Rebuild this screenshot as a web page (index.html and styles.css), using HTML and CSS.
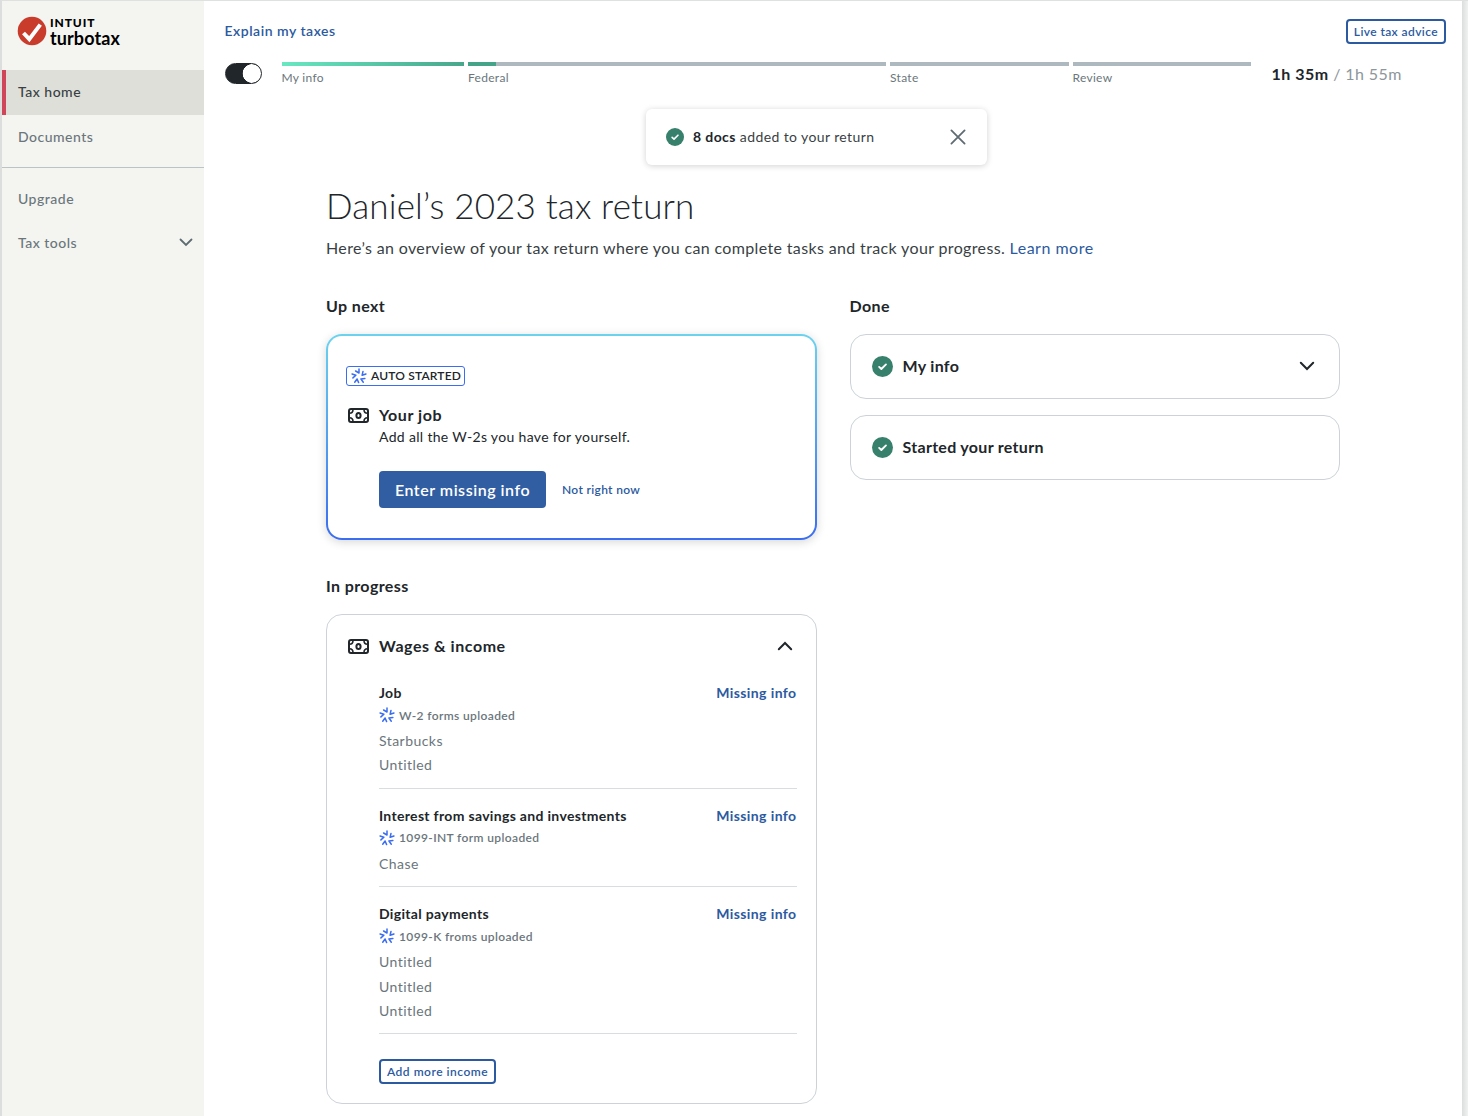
FILE: index.html
```html
<!DOCTYPE html>
<html lang="en">
  <head>
    <meta charset="UTF-8">
    <title>Daniel's 2023 tax return</title>
    <link rel="stylesheet" href="styles.css">
  </head>
  <body>
    <!-- Shared icons -->
    <svg class="sprite" width="0" height="0">
      <symbol id="icon-check" viewBox="0 0 20 20">
        <circle cx="10" cy="10" r="10" fill="#37806b"/>
        <path d="M6.8 10.4l2.1 2L13.3 8" fill="none" stroke="#fff" stroke-width="1.8" stroke-linecap="round" stroke-linejoin="round"/>
      </symbol>
      <symbol id="icon-spark" viewBox="0 0 16 16">
        <g fill="none" stroke="#3b6df0" stroke-width="1.5" stroke-linecap="round" stroke-linejoin="round">
          <path d="M8 1V5L4.6 3"/>
          <path d="M8 1V5L4.6 3" transform="rotate(72 8 8.3)"/>
          <path d="M8 1V5L4.6 3" transform="rotate(144 8 8.3)"/>
          <path d="M8 1V5L4.6 3" transform="rotate(216 8 8.3)"/>
          <path d="M8 1V5L4.6 3" transform="rotate(288 8 8.3)"/>
        </g>
      </symbol>
      <symbol id="icon-cash" viewBox="0 0 21 15">
        <g fill="none" stroke="#21262a" stroke-width="2">
          <rect x="1" y="1" width="19" height="13" rx="2"/>
          <ellipse cx="10.5" cy="7.5" rx="2.1" ry="2.6"/>
          <path d="M1.5 5.2C3.8 5.2 5 4 5 1.5M16 1.5c0 2.5 1.2 3.7 3.5 3.7M1.5 9.8C3.8 9.8 5 11 5 13.5M16 13.5c0-2.5 1.2-3.7 3.5-3.7" stroke-width="1.6"/>
        </g>
      </symbol>
    </svg>

    <div class="app">
      <aside class="sidebar">
        <div class="logo">
          <svg width="30" height="30" viewBox="0 0 30 30">
            <circle cx="15" cy="15" r="14.3" fill="#c93c2c"/>
            <path d="M6.5 17l5.8 6.2L23.3 8.6" fill="none" stroke="#fff" stroke-width="4"/>
          </svg>
          <div class="logo-text">
            <span class="logo-intuit">INTUIT</span>
            <span class="logo-name">turbotax</span>
          </div>
        </div>
        <nav>
          <a class="nav-item active">Tax home</a>
          <a class="nav-item">Documents</a>
          <hr class="nav-line">
          <a class="nav-item">Upgrade</a>
          <a class="nav-item">Tax tools
            <svg width="14" height="9" viewBox="0 0 14 9"><path d="M1.5 1.5L7 7l5.5-5.5" fill="none" stroke="#5f6b72" stroke-width="1.8" stroke-linecap="round"/></svg>
          </a>
        </nav>
      </aside>

      <main class="main">
        <header class="topbar">
          <a class="explain">Explain my taxes</a>
          <button class="btn-outline">Live tax advice</button>
        </header>

        <div class="progress">
          <span class="toggle"></span>
          <div class="steps">
            <div class="step done">My info</div>
            <div class="step started">Federal</div>
            <div class="step">State</div>
            <div class="step">Review</div>
          </div>
          <div class="time"><b>1h 35m</b> <span>/ 1h 55m</span></div>
        </div>

        <div class="toast">
          <svg width="18" height="18"><use href="#icon-check"/></svg>
          <span class="toast-text"><b>8 docs</b> added to your return</span>
          <svg width="16" height="16" viewBox="0 0 16 16"><path d="M1.4 1.4l13.2 13.2M14.6 1.4L1.4 14.6" stroke="#5f6b72" stroke-width="1.8" stroke-linecap="round"/></svg>
        </div>

        <div class="content">
          <h1>Daniel’s 2023 tax return</h1>
          <p class="intro">Here’s an overview of your tax return where you can complete tasks and track your progress. <a>Learn more</a></p>

          <div class="columns">
            <div class="column">
              <h2>Up next</h2>
              <section class="card card-next">
                <span class="badge"><svg width="16" height="16"><use href="#icon-spark"/></svg>AUTO STARTED</span>
                <div class="card-head">
                  <svg class="cash" width="21" height="15"><use href="#icon-cash"/></svg>
                  <h3>Your job</h3>
                </div>
                <p class="job-text">Add all the W-2s you have for yourself.</p>
                <div class="actions">
                  <button class="btn-primary">Enter missing info</button>
                  <a class="skip">Not right now</a>
                </div>
              </section>

              <h2>In progress</h2>
              <section class="card card-wages">
                <div class="card-head">
                  <svg class="cash" width="21" height="15"><use href="#icon-cash"/></svg>
                  <h3>Wages &amp; income</h3>
                  <svg class="chevron" width="16" height="10" viewBox="0 0 16 10"><path d="M1.8 8.2L8 2l6.2 6.2" fill="none" stroke="#21262a" stroke-width="2" stroke-linecap="round"/></svg>
                </div>

                <div class="income">
                  <div class="income-title"><span>Job</span><a>Missing info</a></div>
                  <div class="uploaded"><svg width="16" height="16"><use href="#icon-spark"/></svg>W-2 forms uploaded</div>
                  <ul>
                    <li>Starbucks</li>
                    <li>Untitled</li>
                  </ul>
                </div>
                <div class="income">
                  <div class="income-title"><span>Interest from savings and investments</span><a>Missing info</a></div>
                  <div class="uploaded"><svg width="16" height="16"><use href="#icon-spark"/></svg>1099-INT form uploaded</div>
                  <ul>
                    <li>Chase</li>
                  </ul>
                </div>
                <div class="income">
                  <div class="income-title"><span>Digital payments</span><a>Missing info</a></div>
                  <div class="uploaded"><svg width="16" height="16"><use href="#icon-spark"/></svg>1099-K froms uploaded</div>
                  <ul>
                    <li>Untitled</li>
                    <li>Untitled</li>
                    <li>Untitled</li>
                  </ul>
                </div>
                <button class="btn-outline btn-add">Add more income</button>
              </section>
            </div>

            <div class="column">
              <h2>Done</h2>
              <section class="card card-done">
                <svg width="21" height="21"><use href="#icon-check"/></svg>
                <h3>My info</h3>
                <svg class="chevron" width="16" height="10" viewBox="0 0 16 10"><path d="M1.8 1.8L8 8l6.2-6.2" fill="none" stroke="#21262a" stroke-width="2" stroke-linecap="round"/></svg>
              </section>
              <section class="card card-done">
                <svg width="21" height="21"><use href="#icon-check"/></svg>
                <h3>Started your return</h3>
              </section>
            </div>
          </div>
        </div>
      </main>
      <div class="edge"></div>
    </div>
  </body>
</html>
```
FILE: styles.css
```css
* {
  box-sizing: border-box;
}

body {
  margin: 0;
  font-family: Lato, "Liberation Sans", sans-serif;
  letter-spacing: 0.4px;
  color: #21262a;
  background: #fff;
}

h1, h2, h3, p, ul {
  margin: 0;
  padding: 0;
}

a {
  color: #2c5aa0;
}

.sprite {
  display: block;
}

.app {
  display: flex;
  width: 1468px;
  height: 1116px;
  border-top: 1px solid #dfe0e0;
  border-left: 2px solid #dcdddd;
  overflow: hidden;
}

.edge {
  width: 6px;
  background: linear-gradient(to right, #dcdddd, #f0f1f1);
}

/* Sidebar */
.sidebar {
  width: 202px;
  background: #f4f5f0;
}

.logo {
  display: flex;
  height: 69px;
  padding: 15px 0 0 15px;
}

.logo-text {
  display: flex;
  flex-direction: column;
  padding-left: 3px;
  color: #000;
}

.logo-intuit {
  font-size: 12px;
  line-height: 14px;
  font-weight: 900;
  letter-spacing: 0.9px;
}

.logo-name {
  font-size: 18px;
  line-height: 16px;
  font-weight: 700;
  letter-spacing: 0.1px;
}

.nav-item {
  display: flex;
  align-items: center;
  justify-content: space-between;
  height: 44.5px;
  padding: 0 11px 0 16px;
  font-size: 14px;
  font-weight: 500;
  letter-spacing: 0.5px;
  color: #6b767c;
}

.nav-item.active {
  background: #dedfd9;
  border-left: 4px solid #d0455a;
  padding: 0 0 1px 12px;
  color: #393f44;
}

.nav-line {
  margin: 8px 0 8px;
  border: none;
  border-top: 1px solid #bac3c8;
}

/* Main area */
.main {
  flex: 1;
  background: #fff;
}

.topbar {
  display: flex;
  align-items: center;
  justify-content: space-between;
  padding: 18px 16px 0 20.5px;
}

.explain {
  padding-bottom: 2px;
  font-size: 14px;
  font-weight: 600;
  letter-spacing: 0.52px;
}

.btn-outline {
  height: 25px;
  padding: 0 6px;
  border: 2px solid #2c5aa0;
  border-radius: 4px;
  background: #fff;
  font: 600 12px/20px Lato, sans-serif;
  letter-spacing: 0.4px;
  color: #2c5aa0;
}

.progress {
  display: flex;
  padding: 18px 0 0 20.5px;
}

.toggle {
  width: 37px;
  height: 21px;
  margin: 1px 20px 0 0;
  border: 1px solid #21262a;
  border-radius: 11px;
  background: radial-gradient(circle at 26px 9.5px, #fff 9px, #21262a 9.6px);
}

.steps {
  display: grid;
  grid-template-columns: 182.5px 418px 178.5px 178.5px;
  gap: 4px;
  width: 970px;
}

.step {
  border-top: 4px solid #aeb9bf;
  font-size: 12px;
  line-height: 24px;
  letter-spacing: 0.3px;
  color: #6b767c;
}

.step.done {
  border-image: linear-gradient(to right, #68e8c2, #48a68b) 1;
}

.step.started {
  border-image: linear-gradient(to right, #45a388 29px, #aeb9bf 29px) 1;
}

.time {
  margin-left: 20px;
  font-size: 16px;
  line-height: 23px;
}

.time b {
  font-weight: 700;
  letter-spacing: 0.5px;
}

.time span {
  color: #8d969b;
}

.toast {
  display: flex;
  align-items: center;
  width: 341px;
  height: 56px;
  margin: 19px 0 0 442px;
  padding: 0 21px 0 20px;
  border-radius: 6px;
  box-shadow: 0 1px 6px rgba(0, 0, 0, 0.18);
}

.toast-text {
  flex: 1;
  padding: 0 0 2px 9px;
  font-size: 14px;
  color: #393f44;
}

.toast-text b {
  color: #21262a;
}

/* Content */
.content {
  padding: 19px 0 0 122px;
}

h1 {
  font-size: 35px;
  line-height: 42px;
  font-weight: 300;
  letter-spacing: 0.15px;
}

.intro {
  margin-top: 12px;
  font-size: 16px;
  line-height: 20px;
  letter-spacing: 0.36px;
  color: #393f44;
}

.intro a {
  letter-spacing: 0.5px;
}

.columns {
  display: flex;
  gap: 33px;
  margin-top: 38px;
}

.column {
  width: 490.5px;
}

h2 {
  height: 38px;
  font-size: 16px;
  line-height: 20px;
  font-weight: 700;
}

h3 {
  font-size: 16px;
  line-height: 20px;
  font-weight: 700;
  letter-spacing: 0.55px;
}

.card {
  border: 1px solid #ccd3d7;
  border-radius: 16px;
  background: #fff;
}

.card-next {
  height: 206px;
  margin-bottom: 36px;
  padding: 30px 18px;
  border: 2px solid transparent;
  background: linear-gradient(#fff, #fff) padding-box, linear-gradient(#6bd3ee, #3b6df0) border-box;
  box-shadow: 0 2px 10px rgba(0, 0, 0, 0.16);
}

.badge {
  display: flex;
  align-items: center;
  gap: 4px;
  width: 119px;
  height: 20px;
  padding-left: 4px;
  border: 1px solid #3b6df0;
  border-radius: 3px;
  font-size: 12px;
  line-height: 16px;
  font-weight: 600;
  letter-spacing: 0.17px;
}

.card-head {
  display: flex;
  align-items: center;
}

.card-next .card-head {
  padding: 19px 0 0 2px;
}

.cash {
  margin-right: 10px;
}

.chevron {
  margin-left: auto;
}

.job-text {
  padding: 3px 0 0 33px;
  font-size: 14px;
  line-height: 18px;
  letter-spacing: 0.33px;
}

.actions {
  display: flex;
  align-items: center;
  gap: 16px;
  padding: 25px 0 0 33px;
}

.btn-primary {
  width: 167px;
  height: 37px;
  padding: 0;
  border: none;
  border-radius: 4px;
  background: #315ea2;
  font: 600 16px Lato, sans-serif;
  letter-spacing: 0.53px;
  color: #fff;
}

.skip {
  padding-bottom: 1px;
  font-size: 12px;
  font-weight: 600;
  letter-spacing: 0.33px;
}

.card-wages {
  height: 490px;
  padding: 21px 19px 0 20px;
}

.card-wages .card-head {
  padding: 0 4px 10px 1px;
}

.income {
  margin-left: 32px;
  padding: 16px 0 10px;
  border-bottom: 1px solid #d8dde0;
}

.income-title {
  display: flex;
  justify-content: space-between;
  font-size: 14px;
  line-height: 22px;
  font-weight: 700;
  letter-spacing: 0.32px;
}

.income-title a {
  letter-spacing: 0.4px;
}

.uploaded {
  display: flex;
  align-items: center;
  gap: 4px;
  height: 22px;
  font-size: 12px;
  font-weight: 600;
  letter-spacing: 0.37px;
  color: #6b767c;
}

.income ul {
  list-style: none;
  padding-top: 3px;
}

.income li {
  font-size: 14px;
  line-height: 24.4px;
  letter-spacing: 0.45px;
  color: #6b767c;
}

.btn-add {
  margin: 25px 0 0 32px;
  letter-spacing: 0.5px;
}

.card-done {
  display: flex;
  align-items: center;
  gap: 10px;
  height: 65px;
  margin-bottom: 16px;
  padding: 0 24px 1px 21px;
}

.card-done h3 {
  letter-spacing: 0.3px;
}
```
